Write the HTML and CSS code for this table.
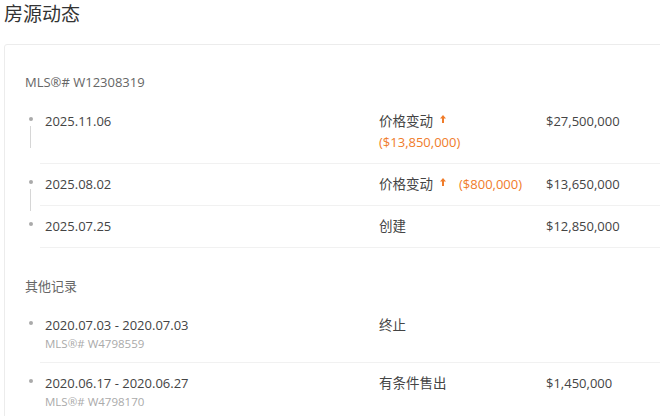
FILE: index.html
```html
<!DOCTYPE html>
<html lang="zh">
<head>
  <meta charset="UTF-8">
  <title>房源动态</title>
  <link rel="stylesheet" href="styles.css">
</head>
<body>

  <h2 class="page-title">房源动态</h2>

  <div class="card">
    <div class="group-label">MLS®# W12308319</div>
    <ul class="timeline">
      <li class="event">
        <div class="marker"><span class="dot"></span><span class="line"></span></div>
        <div class="event-body">
          <div class="event-date">2025.11.06</div>
          <div class="event-type">价格变动<svg class="arrow" width="6" height="8" viewBox="0 0 6 8"><path d="M3 0 L6 3.5 H4 V8 H2 V3.5 H0 Z" fill="#f07c2a"/></svg><span class="change below">($13,850,000)</span></div>
          <div class="event-price">$27,500,000</div>
        </div>
      </li>
      <li class="event">
        <div class="marker"><span class="dot"></span><span class="line"></span></div>
        <div class="event-body">
          <div class="event-date">2025.08.02</div>
          <div class="event-type">价格变动<svg class="arrow" width="6" height="8" viewBox="0 0 6 8"><path d="M3 0 L6 3.5 H4 V8 H2 V3.5 H0 Z" fill="#f07c2a"/></svg><span class="change">($800,000)</span></div>
          <div class="event-price">$13,650,000</div>
        </div>
      </li>
      <li class="event">
        <div class="marker"><span class="dot"></span></div>
        <div class="event-body">
          <div class="event-date">2025.07.25</div>
          <div class="event-type">创建</div>
          <div class="event-price">$12,850,000</div>
        </div>
      </li>
    </ul>

    <div class="group-label other">其他记录</div>
    <ul class="timeline">
      <li class="event">
        <div class="marker"><span class="dot"></span></div>
        <div class="event-body">
          <div class="event-date">2020.07.03 - 2020.07.03<div class="sub">MLS®# W4798559</div></div>
          <div class="event-type">终止</div>
          <div class="event-price"></div>
        </div>
      </li>
      <li class="event">
        <div class="marker"><span class="dot"></span></div>
        <div class="event-body">
          <div class="event-date">2020.06.17 - 2020.06.27<div class="sub">MLS®# W4798170</div></div>
          <div class="event-type">有条件售出</div>
          <div class="event-price">$1,450,000</div>
        </div>
      </li>
    </ul>
  </div>

</body>
</html>
```

FILE: styles.css
```css
html, body {
  overflow: hidden;
}

body {
  margin: 0;
  padding: 0 0 0 4px;
  font-family: "Open Sans", "Noto Sans CJK SC", sans-serif;
  font-size: 13px;
  color: #444;
  background-color: #fff;
}

.page-title {
  margin: 0;
  font-size: 19px;
  font-weight: normal;
  line-height: 28px;
  color: #333;
}

.card {
  margin: 16px -60px 0 0;
  padding: 27px 20px 0 20px;
  border: 1px solid #ececec;
  border-radius: 3px;
}

.group-label {
  line-height: 21px;
  color: #666;
}

.group-label.other {
  margin-top: 28px;
}

.timeline {
  list-style: none;
  margin: 8px 0 0 0;
  padding: 0;
}

.event {
  display: flex;
}

.marker {
  position: relative;
  width: 15px;
  flex-shrink: 0;
}

.dot {
  display: block;
  width: 4px;
  height: 4px;
  margin: 16px 0 0 4px;
  border-radius: 50%;
  background-color: #aaa;
}

/* connector to the next event, may run past the row */
.line {
  position: absolute;
  left: 5px;
  top: 25px;
  width: 1px;
  height: 22px;
  background-color: #d6d6d6;
}

.event-body {
  flex: 1;
  display: grid;
  grid-template-columns: 334px 167px 1fr;
  padding: 10px 0 10px 5px;
  border-bottom: 1px solid #f1f1f1;
  line-height: 21px;
}

.event-type {
  padding-right: 12px;
  font-size: 13.5px;
  line-height: 21px;
}

.arrow {
  margin: 4px 0 0 7px;
  vertical-align: top;
}

.change {
  display: inline-block;
  vertical-align: top;
  white-space: nowrap;
  margin-left: 13px;
  font-size: 13px;
  color: #f07c2a;
}

.change.below {
  display: block;
  margin-left: 0;
}

.sub {
  font-size: 11.5px;
  line-height: 16px;
  color: #aaa;
}
```
